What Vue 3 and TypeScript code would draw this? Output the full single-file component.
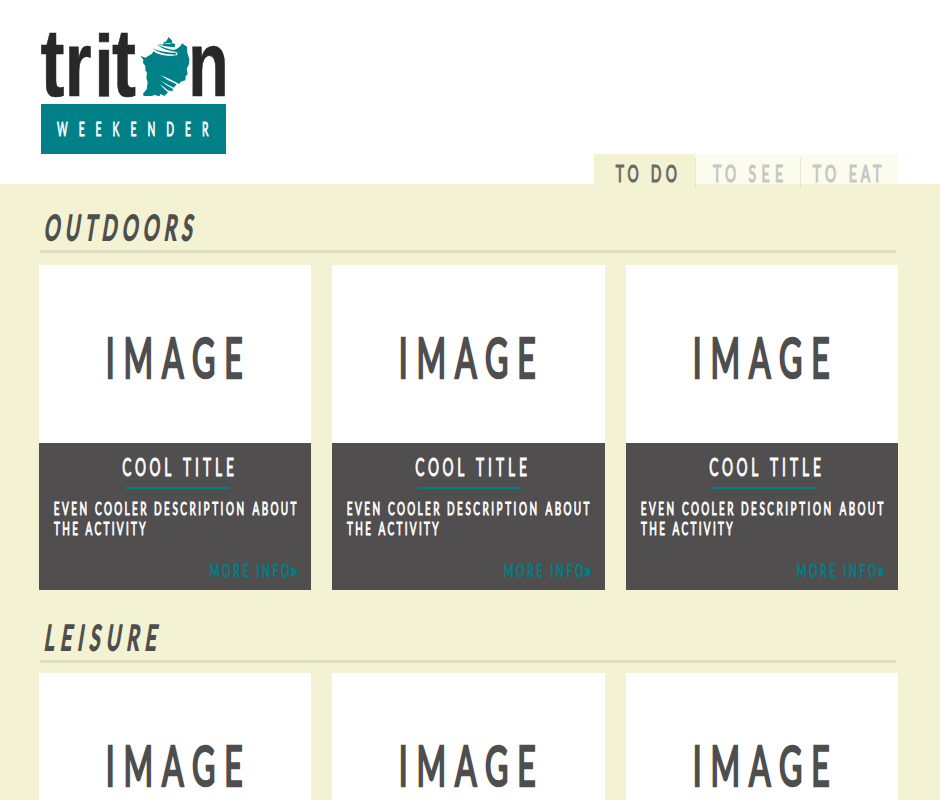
<script setup lang="ts">
import { h, type FunctionalComponent } from 'vue'

interface Run {
  t: string
  x: number
  w: number
  y: number
  italic?: boolean
}

interface LabelProps {
  width: number
  height: number
  size: number
  squeeze: number
  stroke: number
  runs: Run[]
}

/* Condensed, tracked-out lettering: glyphs are squeezed, words keep a set measure. */
const Label: FunctionalComponent<LabelProps> = (p) =>
  h(
    'svg',
    { width: p.width, height: p.height, viewBox: `0 0 ${p.width} ${p.height}` },
    p.runs.map((r) =>
      h(
        'text',
        {
          transform: `translate(${r.x} ${r.y})${r.italic ? ' skewX(-9)' : ''} scale(${p.squeeze} 1)`,
          'font-size': p.size,
          'stroke-width': p.stroke,
          textLength: r.t.length > 1 ? r.w / p.squeeze : undefined,
          lengthAdjust: 'spacing',
        },
        r.t,
      ),
    ),
  )
Label.props = ['width', 'height', 'size', 'squeeze', 'stroke', 'runs']

interface Tab {
  id: string
  width: number
  active: boolean
  runs: Run[]
}

const tabs: Tab[] = [
  { id: 'do', width: 101, active: true, runs: [{ t: 'TO', x: 21.8, w: 22.8, y: 28 }, { t: 'DO', x: 56.8, w: 26, y: 28 }] },
  { id: 'see', width: 105, active: false, runs: [{ t: 'TO', x: 18, w: 23.2, y: 28 }, { t: 'SEE', x: 53.5, w: 34.5, y: 28 }] },
  { id: 'eat', width: 98, active: false, runs: [{ t: 'TO', x: 12.7, w: 23.5, y: 28 }, { t: 'EAT', x: 48.7, w: 32.6, y: 28 }] },
]

interface Section {
  name: string
  items: { id: number; detailed: boolean }[]
  runs: Run[]
}

const row = (detailed: boolean) => [1, 2, 3].map((id) => ({ id, detailed }))

const sections: Section[] = [
  { name: 'outdoors', items: row(true), runs: [{ t: 'OUTDOORS', x: 3.5, w: 148, y: 29.6, italic: true }] },
  { name: 'leisure', items: row(false), runs: [{ t: 'LEISURE', x: 3.5, w: 112, y: 29.6, italic: true }] },
]

const weekender: Run[] = [{ t: 'WEEKENDER', x: 16, w: 151.5, y: 32 }]
const image: Run[] = [{ t: 'IMAGE', x: 66.7, w: 137, y: 113 }]
const title: Run[] = [
  { t: 'COOL', x: 83.3, w: 49, y: 32.6 },
  { t: 'TITLE', x: 144, w: 51, y: 32.6 },
]
const description: Run[] = [
  { t: 'EVEN', x: 14.7, w: 33.5, y: 16 },
  { t: 'COOLER', x: 56, w: 51.5, y: 16 },
  { t: 'DESCRIPTION', x: 115, w: 90, y: 16 },
  { t: 'ABOUT', x: 213.5, w: 44, y: 16 },
  { t: 'THE', x: 15, w: 24, y: 36 },
  { t: 'ACTIVITY', x: 46.5, w: 60, y: 36 },
]
const more: Run[] = [
  { t: 'MORE', x: 0, w: 38.5, y: 18 },
  { t: 'INFO', x: 46.5, w: 33, y: 18 },
]
const arrow: Run[] = [{ t: '»', x: 80.5, w: 8, y: 18 }]
</script>

<template>
  <div class="page">
    <header class="header">
      <div class="logo">
        <svg class="mark" width="187" height="74" viewBox="0 0 187 74">
          <g class="wordmark">
            <text transform="translate(-.6 66) scale(.8 1.08)" font-size="90">t</text>
            <text transform="translate(23.8 66) scale(.75 1)" font-size="92">r</text>
            <text transform="translate(53.2 66) scale(.8 1)" font-size="88">i</text>
            <text transform="translate(71 66) scale(.8 1.08)" font-size="90">t</text>
            <text transform="translate(147.3 66) scale(.72 1)" font-size="92">n</text>
          </g>
          <g transform="translate(-10 -10) scale(.33333)">
            <path class="shell" d="M328 107 343 113 363 101 367 94 Q396 111 438 106 L440 98 426 91 Q449 84 453 70 L468 80 469 98 475 117 474 132 467 147 470 163 464 168 463 181 449 185 445 192 Q416 176 388 165 Q411 183 437 193 L428 203 Q405 192 386 180 Q403 194 426 207 L424 214 410 211 Q401 203 387 192 Q396 205 411 217 L400 228 389 222 385 229 371 225 362 228 338 228 336 221 347 208 350 187 346 174 348 158 343 151 343 137 336 129 337 119Z" />
            <path class="shell" d="M413 51 424 63 422 68 433 73 432 80 Q408 83 379 72 L397 74 398 65 405 65Z" />
            <path class="shell" d="M377 73 Q402 87 431 91 L439 98 Q400 94 377 73ZM363 84 Q391 98 435 99 L434 104 Q393 106 363 84Z" />
            <path class="slit" d="M391 65 Q407 72 425 69 Q411 76 391 65ZM374 77 Q403 92 439 95 Q404 99 374 77ZM362 91 Q388 106 434 104 Q394 113 362 91Z" />
          </g>
        </svg>
        <div class="banner">
          <Label :width="185" :height="49" :size="18.3" :squeeze="0.56" :stroke="0.7" :runs="weekender" />
        </div>
      </div>
      <nav class="tabs">
        <a v-for="tab in tabs" :key="tab.id" class="tab" :class="{ active: tab.active }">
          <Label :width="tab.width" :height="30" :size="24" :squeeze="0.58" :stroke="1" :runs="tab.runs" />
        </a>
      </nav>
    </header>

    <main class="content">
      <section v-for="section in sections" :key="section.name" class="section" :class="section.name">
        <h2 class="heading">
          <Label :width="300" :height="40" :size="34.5" :squeeze="0.56" :stroke="1.8" :runs="section.runs" />
        </h2>
        <div class="cards">
          <article v-for="item in section.items" :key="item.id" class="card">
            <div class="image">
              <Label :width="272" :height="178" :size="56" :squeeze="0.57" :stroke="2.2" :runs="image" />
            </div>
            <div v-if="item.detailed" class="details">
              <div class="title">
                <Label :width="272" :height="44" :size="25" :squeeze="0.55" :stroke="0.8" :runs="title" />
              </div>
              <div class="rule"></div>
              <Label class="description" :width="272" :height="44" :size="17.8" :squeeze="0.56" :stroke="0.8" :runs="description" />
              <a class="more">
                <Label :width="80" :height="24" :size="17.8" :squeeze="0.58" :stroke="0.8" :runs="more" />
                <Label class="arrow" :width="96" :height="24" :size="19" :squeeze="0.85" :stroke="1" :runs="arrow" />
              </a>
            </div>
          </article>
        </div>
      </section>
    </main>
  </div>
</template>

<style>
body {
  margin: 0;
}
svg {
  display: block;
  overflow: visible;
}
text {
  fill: currentColor;
  stroke: currentColor;
  vector-effect: non-scaling-stroke;
}
</style>

<style scoped>
.page {
  width: 940px;
  height: 800px;
  overflow: hidden;
  background: #fff;
  font-family: Lato, "Liberation Sans", sans-serif;
}
.header {
  display: flex;
  justify-content: space-between;
  box-sizing: border-box;
  height: 184px;
  padding: 30px 42px 0 41px;
}
.logo {
  width: 185px;
}
.wordmark {
  font-family: "Liberation Sans", Arial, sans-serif;
  font-weight: 700;
  color: #282828;
}
.wordmark text {
  stroke-width: 0.6;
}
.shell {
  fill: #008187;
}
.slit {
  fill: #fff;
}
.banner {
  height: 49.5px;
  background: #008187;
  color: #fff;
}
.tabs {
  display: flex;
  align-self: flex-end;
  height: 30px;
}
.tab {
  position: relative;
  background: #fbfbee;
  color: #c6c6c4;
}
.tab.active {
  background: #f3f2d3;
  color: #686868;
}
.tab + .tab::before {
  content: "";
  position: absolute;
  left: 0;
  top: 4px;
  width: 1px;
  height: 30px;
  background: rgba(190, 190, 150, 0.3);
}
.content {
  height: 616px;
  padding: 0 42px 0 39px;
  background: #f3f2d3;
}
.section {
  padding-top: 26px;
}
.section.leisure {
  padding-top: 30px;
}
.heading {
  height: 40px;
  margin: 0 2px 0 1px;
  border-bottom: 3px solid #dfdec3;
  color: #4f4e4e;
  font-weight: 400;
}
.cards {
  display: grid;
  grid-template-columns: repeat(3, 272.3px);
  column-gap: 21.2px;
  margin-top: 12px;
}
.leisure .cards {
  margin-top: 10px;
}
.image {
  height: 178px;
  background: #fff;
  color: #4f4e4e;
}
.leisure .image {
  height: 127px;
}
.details {
  display: flex;
  flex-direction: column;
  height: 147px;
  background: #504e4e;
  color: #fff;
}
.rule {
  width: 104px;
  height: 2px;
  margin-left: 86px;
  background: #007f86;
}
.description {
  margin-top: 10px;
}
.title {
  height: 44px;
}
.more {
  display: grid;
  align-self: flex-end;
  margin: 16px 5px 0 0;
  color: #007f86;
}
.more > svg {
  grid-area: 1 / 1;
}
</style>
